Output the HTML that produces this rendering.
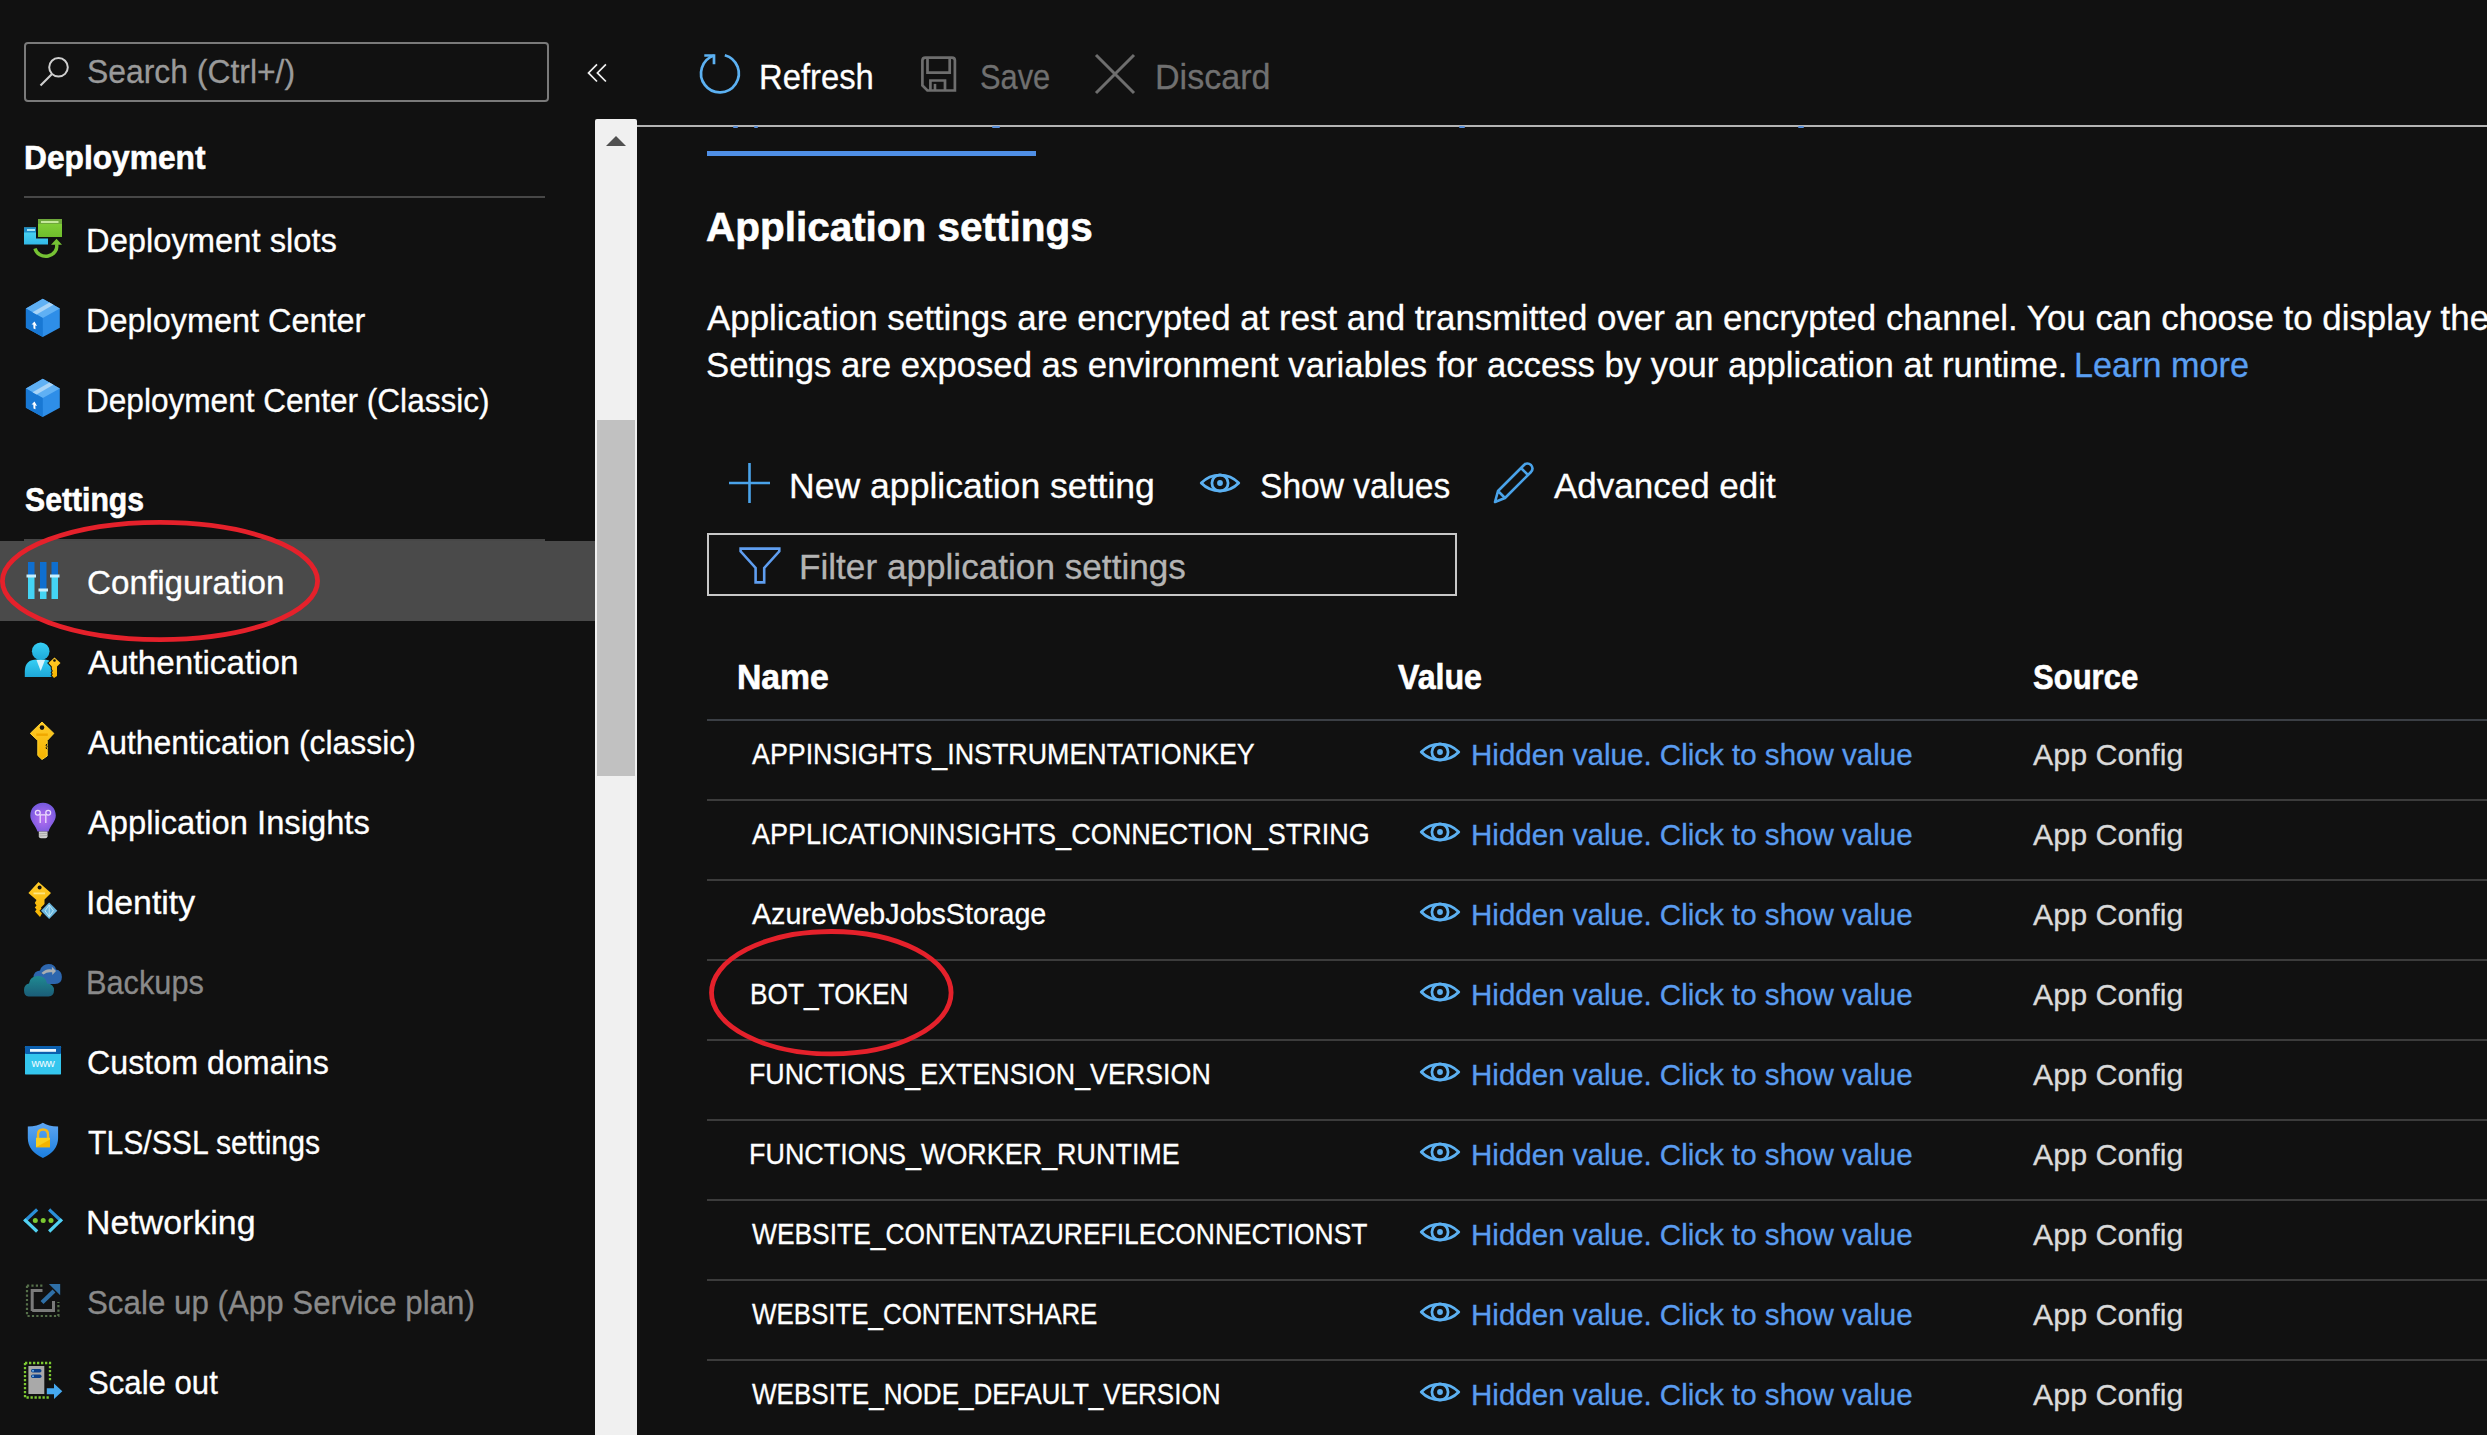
<!DOCTYPE html>
<html><head><meta charset="utf-8"><title>Configuration</title>
<style>
html,body{margin:0;padding:0;background:#111111;width:2487px;height:1435px;overflow:hidden;}
body{position:relative;font-family:"Liberation Sans",sans-serif;color:#fff;}
.t{position:absolute;white-space:nowrap;line-height:1;transform-origin:0 0;-webkit-text-stroke:0.3px currentColor;}
.ic{position:absolute;overflow:visible;}
</style></head><body>
<div style="position:absolute;left:24px;top:42px;width:521px;height:56px;border:2px solid #7a7a7a;border-radius:4px"></div>
<svg class="ic" style="left:36px;top:54px" width="34" height="36" viewBox="0 0 34 36"><circle cx="22.5" cy="13.3" r="9.3" fill="none" stroke="#cfcfcf" stroke-width="2"/><line x1="16" y1="20" x2="4.5" y2="31.5" stroke="#cfcfcf" stroke-width="2.2"/></svg>
<svg class="ic" style="left:584px;top:60px" width="26" height="26" viewBox="0 0 26 26"><path d="M13 4.4 L4.5 12.9 L13 21.5 M21.9 4.4 L13.4 12.9 L21.9 21.5" fill="none" stroke="#f0f0f0" stroke-width="1.7"/></svg>
<div style="position:absolute;left:24px;top:196px;width:521px;height:2px;background:#474747"></div>
<div style="position:absolute;left:24px;top:539px;width:521px;height:2px;background:#474747"></div>
<div style="position:absolute;left:0;top:541px;width:595px;height:80px;background:#4a4a4a"></div>
<div style="position:absolute;left:595px;top:119px;width:42px;height:1316px;background:#f0f0f0;border-radius:2px 2px 0 0"></div>
<div style="position:absolute;left:597px;top:420px;width:38px;height:356px;background:#c1c1c1"></div>
<svg class="ic" style="left:604px;top:134px" width="24" height="14" viewBox="0 0 24 14"><path d="M2 12 L12 2 L22 12 Z" fill="#505050"/></svg>
<div style="position:absolute;left:637px;top:125px;width:1850px;height:2px;background:#b4b4b4"></div>
<div style="position:absolute;left:733px;top:126px;width:5px;height:2px;background:#5a8fd8;border-radius:1px"></div>
<div style="position:absolute;left:754px;top:126px;width:4px;height:2px;background:#5a8fd8;border-radius:1px"></div>
<div style="position:absolute;left:992px;top:126px;width:8px;height:2px;background:#5a8fd8;border-radius:1px"></div>
<div style="position:absolute;left:1459px;top:126px;width:6px;height:2px;background:#5a8fd8;border-radius:1px"></div>
<div style="position:absolute;left:1798px;top:126px;width:6px;height:2px;background:#5a8fd8;border-radius:1px"></div>
<div style="position:absolute;left:707px;top:151px;width:329px;height:5px;background:#4f8fe6"></div>
<div style="position:absolute;left:707px;top:533px;width:746px;height:59px;border:2px solid #c8c8c8"></div>
<div style="position:absolute;left:707px;top:719px;width:1780px;height:2px;background:#3b3f45"></div>
<div style="position:absolute;left:707px;top:799px;width:1780px;height:2px;background:#3c3c3c"></div>
<div style="position:absolute;left:707px;top:879px;width:1780px;height:2px;background:#3c3c3c"></div>
<div style="position:absolute;left:707px;top:959px;width:1780px;height:2px;background:#3c3c3c"></div>
<div style="position:absolute;left:707px;top:1039px;width:1780px;height:2px;background:#3c3c3c"></div>
<div style="position:absolute;left:707px;top:1119px;width:1780px;height:2px;background:#3c3c3c"></div>
<div style="position:absolute;left:707px;top:1199px;width:1780px;height:2px;background:#3c3c3c"></div>
<div style="position:absolute;left:707px;top:1279px;width:1780px;height:2px;background:#3c3c3c"></div>
<div style="position:absolute;left:707px;top:1359px;width:1780px;height:2px;background:#3c3c3c"></div>
<svg class="ic" style="left:696px;top:50px" width="48" height="48" viewBox="0 0 48 48"><path d="M28.8 5.2 A18.9 18.9 0 1 1 18 5.5" fill="none" stroke="#5cb1f2" stroke-width="2.7"/><path d="M8.3 5.5 H18 V14.2" fill="none" stroke="#5cb1f2" stroke-width="2.7"/></svg>
<svg class="ic" style="left:919px;top:54px" width="40" height="40" viewBox="0 0 40 40"><path d="M6.5 3.6 H32.9 Q35.9 3.6 35.9 6.6 V36.5 H8.4 L3.4 31.5 V6.6 Q3.4 3.6 6.5 3.6 Z" fill="none" stroke="#6e6e6e" stroke-width="2.7"/><path d="M8.5 3.6 V18.7 H30.7 V3.6" fill="none" stroke="#6e6e6e" stroke-width="2.7"/><path d="M11.4 36.5 V26.5 H26 V36.5" fill="none" stroke="#6e6e6e" stroke-width="2.7"/><path d="M16 36.5 V29.9" fill="none" stroke="#6e6e6e" stroke-width="2.6"/></svg>
<svg class="ic" style="left:1093px;top:52px" width="44" height="44" viewBox="0 0 44 44"><path d="M3 3 L41 41 M41 3 L3 41" fill="none" stroke="#6e6e6e" stroke-width="3"/></svg>
<svg class="ic" style="left:727px;top:461px" width="46" height="44" viewBox="0 0 46 44"><path d="M2 22 H43 M22.5 2 V42" stroke="#4aa3ea" stroke-width="2.6"/></svg>
<svg class="ic" style="left:1194.8px;top:467.8px" width="50" height="30" viewBox="0 0 50 30"><path d="M6.25 15.00 A26.20 26.20 0 0 1 43.75 15.00 A26.20 26.20 0 0 1 6.25 15.00 Z" fill="none" stroke="#5cb1f2" stroke-width="2.80" stroke-linejoin="round"/><circle cx="25" cy="15" r="8.1" fill="none" stroke="#5cb1f2" stroke-width="2.80"/><circle cx="25" cy="15" r="2.9" fill="#5cb1f2"/></svg>
<svg class="ic" style="left:1491px;top:460px" width="46" height="46" viewBox="0 0 46 46"><path d="M4 42 L7 31 L33 5 Q36.5 2 40 5 Q43 8.5 40 12 L14 38 Z M7 31 L14 38 M30 8 L37 15" fill="none" stroke="#4aa3ea" stroke-width="2.6" stroke-linejoin="round"/></svg>
<svg class="ic" style="left:737px;top:546px" width="46" height="40" viewBox="0 0 46 40"><path d="M3.6 2.6 H42.3 V5.3 L27.2 22 V36.4 H18.6 V22 L3.6 5.3 Z" fill="none" stroke="#5f9ef0" stroke-width="2.6" stroke-linejoin="miter"/></svg>
<svg class="ic" style="left:1415.3px;top:737.0px" width="50" height="30" viewBox="0 0 50 30"><path d="M6.25 15.00 A26.20 26.20 0 0 1 43.75 15.00 A26.20 26.20 0 0 1 6.25 15.00 Z" fill="none" stroke="#5cb1f2" stroke-width="2.80" stroke-linejoin="round"/><circle cx="25" cy="15" r="8.1" fill="none" stroke="#5cb1f2" stroke-width="2.80"/><circle cx="25" cy="15" r="2.9" fill="#5cb1f2"/></svg>
<svg class="ic" style="left:1415.3px;top:817.0px" width="50" height="30" viewBox="0 0 50 30"><path d="M6.25 15.00 A26.20 26.20 0 0 1 43.75 15.00 A26.20 26.20 0 0 1 6.25 15.00 Z" fill="none" stroke="#5cb1f2" stroke-width="2.80" stroke-linejoin="round"/><circle cx="25" cy="15" r="8.1" fill="none" stroke="#5cb1f2" stroke-width="2.80"/><circle cx="25" cy="15" r="2.9" fill="#5cb1f2"/></svg>
<svg class="ic" style="left:1415.3px;top:897.0px" width="50" height="30" viewBox="0 0 50 30"><path d="M6.25 15.00 A26.20 26.20 0 0 1 43.75 15.00 A26.20 26.20 0 0 1 6.25 15.00 Z" fill="none" stroke="#5cb1f2" stroke-width="2.80" stroke-linejoin="round"/><circle cx="25" cy="15" r="8.1" fill="none" stroke="#5cb1f2" stroke-width="2.80"/><circle cx="25" cy="15" r="2.9" fill="#5cb1f2"/></svg>
<svg class="ic" style="left:1415.3px;top:977.0px" width="50" height="30" viewBox="0 0 50 30"><path d="M6.25 15.00 A26.20 26.20 0 0 1 43.75 15.00 A26.20 26.20 0 0 1 6.25 15.00 Z" fill="none" stroke="#5cb1f2" stroke-width="2.80" stroke-linejoin="round"/><circle cx="25" cy="15" r="8.1" fill="none" stroke="#5cb1f2" stroke-width="2.80"/><circle cx="25" cy="15" r="2.9" fill="#5cb1f2"/></svg>
<svg class="ic" style="left:1415.3px;top:1057.0px" width="50" height="30" viewBox="0 0 50 30"><path d="M6.25 15.00 A26.20 26.20 0 0 1 43.75 15.00 A26.20 26.20 0 0 1 6.25 15.00 Z" fill="none" stroke="#5cb1f2" stroke-width="2.80" stroke-linejoin="round"/><circle cx="25" cy="15" r="8.1" fill="none" stroke="#5cb1f2" stroke-width="2.80"/><circle cx="25" cy="15" r="2.9" fill="#5cb1f2"/></svg>
<svg class="ic" style="left:1415.3px;top:1137.0px" width="50" height="30" viewBox="0 0 50 30"><path d="M6.25 15.00 A26.20 26.20 0 0 1 43.75 15.00 A26.20 26.20 0 0 1 6.25 15.00 Z" fill="none" stroke="#5cb1f2" stroke-width="2.80" stroke-linejoin="round"/><circle cx="25" cy="15" r="8.1" fill="none" stroke="#5cb1f2" stroke-width="2.80"/><circle cx="25" cy="15" r="2.9" fill="#5cb1f2"/></svg>
<svg class="ic" style="left:1415.3px;top:1217.0px" width="50" height="30" viewBox="0 0 50 30"><path d="M6.25 15.00 A26.20 26.20 0 0 1 43.75 15.00 A26.20 26.20 0 0 1 6.25 15.00 Z" fill="none" stroke="#5cb1f2" stroke-width="2.80" stroke-linejoin="round"/><circle cx="25" cy="15" r="8.1" fill="none" stroke="#5cb1f2" stroke-width="2.80"/><circle cx="25" cy="15" r="2.9" fill="#5cb1f2"/></svg>
<svg class="ic" style="left:1415.3px;top:1297.0px" width="50" height="30" viewBox="0 0 50 30"><path d="M6.25 15.00 A26.20 26.20 0 0 1 43.75 15.00 A26.20 26.20 0 0 1 6.25 15.00 Z" fill="none" stroke="#5cb1f2" stroke-width="2.80" stroke-linejoin="round"/><circle cx="25" cy="15" r="8.1" fill="none" stroke="#5cb1f2" stroke-width="2.80"/><circle cx="25" cy="15" r="2.9" fill="#5cb1f2"/></svg>
<svg class="ic" style="left:1415.3px;top:1377.0px" width="50" height="30" viewBox="0 0 50 30"><path d="M6.25 15.00 A26.20 26.20 0 0 1 43.75 15.00 A26.20 26.20 0 0 1 6.25 15.00 Z" fill="none" stroke="#5cb1f2" stroke-width="2.80" stroke-linejoin="round"/><circle cx="25" cy="15" r="8.1" fill="none" stroke="#5cb1f2" stroke-width="2.80"/><circle cx="25" cy="15" r="2.9" fill="#5cb1f2"/></svg>
<svg class="ic" style="left:0;top:0" width="595" height="1435" viewBox="0 0 595 1435">
<defs>
<linearGradient id="gBlueBody" x1="0" y1="0" x2="0" y2="1"><stop offset="0" stop-color="#50dcf8"/><stop offset="1" stop-color="#32b8e6"/></linearGradient>
<linearGradient id="gGreen" x1="0" y1="0" x2="0" y2="1"><stop offset="0" stop-color="#86d43a"/><stop offset="1" stop-color="#6fbd2c"/></linearGradient>
<linearGradient id="gPerson" x1="0" y1="0" x2="0" y2="1"><stop offset="0" stop-color="#36cff5"/><stop offset="1" stop-color="#1ea8d8"/></linearGradient>
<linearGradient id="gKey" x1="0" y1="0" x2="0" y2="1"><stop offset="0" stop-color="#ffcb2a"/><stop offset="1" stop-color="#f5b400"/></linearGradient>
<radialGradient id="gBulb" cx="0.5" cy="0.55" r="0.6"><stop offset="0" stop-color="#b86ef2"/><stop offset="1" stop-color="#6f58dc"/></radialGradient>
<linearGradient id="gShield" x1="0" y1="0" x2="0" y2="1"><stop offset="0" stop-color="#5ea6f2"/><stop offset="1" stop-color="#1b7fe0"/></linearGradient>
<linearGradient id="gCloudF" x1="0" y1="0" x2="0" y2="1"><stop offset="0" stop-color="#1f8a92"/><stop offset="1" stop-color="#1b5d78"/></linearGradient>
</defs>
<!-- Deployment slots -->
<g>
 <rect x="24" y="227.5" width="24" height="17" fill="url(#gBlueBody)"/>
 <rect x="24" y="227.5" width="24" height="5" fill="#1f8ec8"/>
 <rect x="27" y="229" width="8" height="2" fill="#a6e4f5"/>
 <rect x="36" y="217.5" width="27" height="21" fill="#111"/>
 <rect x="38" y="219" width="24" height="18" fill="url(#gGreen)"/>
 <rect x="38" y="219" width="24" height="5" fill="#6ea83a"/>
 <rect x="41" y="221" width="17.5" height="2" fill="#c5e89a"/>
 <path d="M35 248.5 A11 10 0 0 0 56.5 244" fill="none" stroke="#111" stroke-width="6"/>
 <path d="M35 248.5 A11 10 0 0 0 56.5 244" fill="none" stroke="#76c234" stroke-width="3.4"/>
 <path d="M51 244.7 L56.5 238.8 L62 244.7 Z" fill="#76c234"/>
</g>
<!-- Deployment Center cubes -->
<g>
 <path d="M42.8 298.8 L59.8 308.4 L59.8 327.7 L42.8 336.9 L25.9 327.7 L25.9 308.4 Z" fill="#2e8ee8"/>
 <path d="M42.8 298.8 L59.8 308.4 L42.8 318 L25.9 308.4 Z" fill="#5fb0f4"/>
 <path d="M25.9 308.4 L42.8 318 L42.8 336.9 L25.9 327.7 Z" fill="#1878d4"/>
 <path d="M49.5 302.5 L53.5 304.8 L36.5 314.5 L32.5 312.2 Z" fill="#a9d4f7"/>
 <path d="M34.5 321.5 L31.5 324.5 L33.3 324.6 L33.5 328.5 L35.5 329.3 L35.3 325.5 L37 325.9 Z" fill="#ffffff"/>
</g>
<g transform="translate(0 80)">
 <path d="M42.8 298.8 L59.8 308.4 L59.8 327.7 L42.8 336.9 L25.9 327.7 L25.9 308.4 Z" fill="#2e8ee8"/>
 <path d="M42.8 298.8 L59.8 308.4 L42.8 318 L25.9 308.4 Z" fill="#5fb0f4"/>
 <path d="M25.9 308.4 L42.8 318 L42.8 336.9 L25.9 327.7 Z" fill="#1878d4"/>
 <path d="M49.5 302.5 L53.5 304.8 L36.5 314.5 L32.5 312.2 Z" fill="#a9d4f7"/>
 <path d="M34.5 321.5 L31.5 324.5 L33.3 324.6 L33.5 328.5 L35.5 329.3 L35.3 325.5 L37 325.9 Z" fill="#ffffff"/>
</g>
<!-- Configuration -->
<g>
 <rect x="28" y="562" width="6.5" height="15" fill="#0f6fd0"/>
 <rect x="28" y="577" width="6.5" height="22" fill="#44d4f4"/>
 <rect x="26.5" y="574.5" width="9.5" height="3" fill="#c8eefc"/>
 <rect x="40" y="562" width="6.5" height="29" fill="#0f6fd0"/>
 <rect x="40" y="591" width="6.5" height="8" fill="#44d4f4"/>
 <rect x="38.5" y="588.5" width="9.5" height="3" fill="#c8eefc"/>
 <rect x="51.5" y="562" width="6.5" height="15" fill="#0f6fd0"/>
 <rect x="51.5" y="577" width="6.5" height="22" fill="#44d4f4"/>
 <rect x="50" y="574.5" width="9.5" height="3" fill="#c8eefc"/>
</g>
<!-- Authentication -->
<g>
 <circle cx="40.7" cy="651.3" r="8.8" fill="url(#gPerson)"/>
 <path d="M24.8 677 L24.8 671 Q25 659.5 37 659.5 L45 659.5 Q52.7 660 52.7 668 L52.7 677 Z" fill="url(#gPerson)"/>
 <path d="M36.5 660 L45 660 L40.7 671 Z" fill="#d8f4fc"/>
 <path d="M54.5 657.5 L60.5 663 L57 666.5 L57 676 L54 678 L51.8 675.5 L52.8 674 L51.8 672.5 L52.8 671 L51.8 669 L51.8 666.5 L48.5 663 Z" fill="#111" stroke="#111" stroke-width="2"/>
 <path d="M54.5 657.5 L60.5 663 L57 666.5 L57 676 L54 678 L51.8 675.5 L52.8 674 L51.8 672.5 L52.8 671 L51.8 669 L51.8 666.5 L48.5 663 Z" fill="url(#gKey)"/>
 <circle cx="54.5" cy="660.5" r="1.3" fill="#111"/>
</g>
<!-- Authentication (classic) key -->
<g>
 <path d="M42 722 L53.9 733.4 L47.2 740.5 L47.2 756 L42 759.5 L37.8 755.5 L37.8 740.5 L30.3 733.4 Z" fill="url(#gKey)" stroke="#ffd42e" stroke-width="1" stroke-linejoin="round"/>
 <circle cx="42" cy="727.6" r="2.3" fill="#111"/>
 <rect x="36.3" y="733.5" width="11.5" height="2.4" fill="#f0a800"/>
 <path d="M47.2 744 L45.8 745 L47.2 746.5 L45.8 747.8 L47.2 749.2" fill="none" stroke="#111" stroke-width="1"/>
</g>
<!-- Application Insights bulb -->
<g>
 <path d="M43 802.8 C50.5 802.8 55.8 808.5 55.8 815.5 C55.8 821.5 50 826 48.5 831.5 L37.5 831.5 C36 826 30.3 821.5 30.3 815.5 C30.3 808.5 35.5 802.8 43 802.8 Z" fill="url(#gBulb)"/>
 <path d="M38.8 831.5 L47.5 831.5 L47.5 836.5 Q47.3 838.2 45.5 838.2 L40.8 838.2 Q39 838.2 38.8 836.5 Z" fill="#d0d0d0"/>
 <path d="M39 833.8 L47.3 833.3 M39 836 L47.3 835.5" stroke="#9a9a9a" stroke-width="0.7"/>
 <circle cx="37.8" cy="812.8" r="2.4" fill="none" stroke="#ecdcfc" stroke-width="1.3"/>
 <circle cx="48.2" cy="812.8" r="2.4" fill="none" stroke="#ecdcfc" stroke-width="1.3"/>
 <path d="M40.2 814.8 H45.8 M40.2 814.5 V823 M45.8 814.5 V823" stroke="#ecdcfc" stroke-width="1.3"/>
</g>
<!-- Identity -->
<g>
 <path d="M38.5 882 L51 893 L44.5 899.5 L44.5 904 L41 907.5 L43 911.5 L40 916.9 L35 911.5 L36.5 909.5 L34.8 907.5 L36.5 905.5 L34.8 903 L36.5 900 L28.4 893 Z" fill="url(#gKey)"/>
 <circle cx="39.6" cy="887.5" r="2" fill="#111"/>
 <rect x="33.5" y="892.5" width="11.5" height="1.8" fill="#ffe680"/>
 <path d="M49 900.5 L58.5 910.8 L49 921 L39.5 910.8 Z" fill="#111"/>
 <path d="M49.2 902.6 L57.3 910.8 L49.2 919 L41 910.8 Z" fill="#6ab6de"/>
 <path d="M49.2 905 L49.2 916.5 M45 910.8 L49.2 905 L53.3 910.8 L49.2 916.5 Z" fill="none" stroke="#c8ecf8" stroke-width="0.9"/>
</g>
<!-- Backups cloud -->
<g>
 <path d="M40 984 Q33.5 984 33.5 977.5 Q33.5 971 40 970.5 Q42 964 48.5 964 Q55 964 56 969.5 Q61.9 970.5 61.9 977 Q61.9 984 55 984 Z" fill="#2d66ae"/>
 <path d="M41.5 973 Q46 968 52 969.5 L51.8 966.8 L56 971 L52.3 975 L52.2 972.3 Q47 971.5 43.5 974.5 Z" fill="#a9aeb2"/>
 <path d="M28.5 996.4 Q24 996.4 24 990 Q24 984.5 29 983.5 Q30 976 38 976 Q46 976 47 983.5 Q54 984 54 990.3 Q54 996.4 48.5 996.4 Z" fill="url(#gCloudF)"/>
</g>
<!-- Custom domains -->
<g>
 <rect x="25" y="1046" width="36" height="28.6" rx="1.2" fill="#34c6ee"/>
 <rect x="25" y="1046" width="36" height="8" rx="1" fill="#0b5fae"/>
 <rect x="30" y="1049" width="26" height="2.8" fill="#eef8ff"/>
 <text x="43" y="1067.3" text-anchor="middle" font-family="Liberation Sans" font-size="11" fill="#f4fcff" letter-spacing="-0.3">www</text>
</g>
<!-- TLS shield -->
<g>
 <path d="M42.9 1122.8 Q48 1126.5 58.1 1126.5 L58.1 1138 Q58.1 1151 42.9 1158 Q27.8 1151 27.8 1138 L27.8 1126.5 Q37.8 1126.5 42.9 1122.8 Z" fill="url(#gShield)"/>
 <path d="M38 1138 L38 1134.5 Q38 1129.5 43 1129.5 Q48 1129.5 48 1134.5 L48 1138" fill="none" stroke="#f2b820" stroke-width="2.4"/>
 <rect x="36" y="1137.8" width="14" height="9.4" fill="#f9cf1e"/>
 <path d="M36 1147.2 L50 1139.5 L50 1147.2 Z" fill="#f4b400"/>
</g>
<!-- Networking -->
<g>
 <path d="M36 1210.6 L25.5 1220.4" stroke="#2a8fd8" stroke-width="3.2" stroke-linecap="square" fill="none"/>
 <path d="M25.5 1220.4 L36 1230.4" stroke="#52d2f2" stroke-width="3.2" stroke-linecap="square" fill="none"/>
 <path d="M50.3 1210.6 L60.7 1220.4" stroke="#2a8fd8" stroke-width="3.2" stroke-linecap="square" fill="none"/>
 <path d="M60.7 1220.4 L50.3 1230.4" stroke="#52d2f2" stroke-width="3.2" stroke-linecap="square" fill="none"/>
 <circle cx="35.3" cy="1220.4" r="2.5" fill="#7cc832"/>
 <circle cx="43.2" cy="1220.4" r="2.5" fill="#7cc832"/>
 <circle cx="51" cy="1220.4" r="2.5" fill="#7cc832"/>
</g>
<!-- Scale up (dim) -->
<g>
 <path d="M27 1285.7 H43 M27 1285.7 V1316 H58.4 V1302" fill="none" stroke="#56704a" stroke-width="2.2" stroke-dasharray="2.2 2.2"/>
 <path d="M32.2 1311 V1290.5 H42.5 M32.2 1310.5 H53.5 V1301" fill="none" stroke="#7a7a7a" stroke-width="3"/>
 <path d="M42 1302.5 L54 1291" stroke="#2f6fa6" stroke-width="4.2"/>
 <path d="M48.9 1284 H60.2 V1295.3 Z" fill="#2f6fa6"/>
</g>
<!-- Scale out -->
<g>
 <path d="M25 1363 H50 V1382 M25 1363 V1397.5 H50" fill="none" stroke="#7cc832" stroke-width="2.3" stroke-dasharray="2.3 1.7"/>
 <rect x="28.4" y="1366" width="15.9" height="28" fill="#a9a9a9"/>
 <rect x="31" y="1369" width="10.5" height="3.5" rx="1.7" fill="#0a3f8a"/>
 <rect x="31" y="1374.5" width="10.5" height="3.5" rx="1.7" fill="#0a3f8a"/>
 <circle cx="33" cy="1370.7" r="1" fill="#6ab4f0"/>
 <circle cx="33" cy="1376.2" r="1" fill="#6ab4f0"/>
 <path d="M46.8 1388.3 H54 V1383.5 L62.3 1391.3 L54 1399 V1394.2 H46.8 Z" fill="#45a8f0"/>
</g>
</svg>

<div class="t" style="left:86.87px;top:54.00px;font-size:34.00px;color:#9a9a9a;transform:scaleX(0.9371)">Search (Ctrl+/)</div>
<div class="t" style="left:23.96px;top:141.00px;font-size:33.50px;font-weight:700;-webkit-text-stroke:0.6px currentColor;transform:scaleX(0.9464)">Deployment</div>
<div class="t" style="left:86.20px;top:223.00px;font-size:34.00px;transform:scaleX(0.9623)">Deployment slots</div>
<div class="t" style="left:86.23px;top:303.00px;font-size:34.00px;transform:scaleX(0.9534)">Deployment Center</div>
<div class="t" style="left:86.30px;top:383.00px;font-size:34.00px;transform:scaleX(0.9287)">Deployment Center (Classic)</div>
<div class="t" style="left:25.09px;top:483.00px;font-size:33.50px;font-weight:700;-webkit-text-stroke:0.6px currentColor;transform:scaleX(0.9013)">Settings</div>
<div class="t" style="left:87.24px;top:565.00px;font-size:34.00px;transform:scaleX(0.9769)">Configuration</div>
<div class="t" style="left:87.92px;top:645.00px;font-size:34.00px;transform:scaleX(0.9767)">Authentication</div>
<div class="t" style="left:87.92px;top:725.00px;font-size:34.00px;transform:scaleX(0.9379)">Authentication (classic)</div>
<div class="t" style="left:87.92px;top:805.00px;font-size:34.00px;transform:scaleX(0.9619)">Application Insights</div>
<div class="t" style="left:85.77px;top:885.00px;font-size:34.00px;transform:scaleX(0.9961)">Identity</div>
<div class="t" style="left:86.37px;top:965.00px;font-size:34.00px;color:#8a8a8a;transform:scaleX(0.9035)">Backups</div>
<div class="t" style="left:87.29px;top:1045.00px;font-size:34.00px;transform:scaleX(0.9481)">Custom domains</div>
<div class="t" style="left:88.22px;top:1125.00px;font-size:34.00px;transform:scaleX(0.8875)">TLS/SSL settings</div>
<div class="t" style="left:86.10px;top:1205.00px;font-size:34.00px;transform:scaleX(0.9965)">Networking</div>
<div class="t" style="left:87.49px;top:1285.00px;font-size:34.00px;color:#8a8a8a;transform:scaleX(0.9204)">Scale up (App Service plan)</div>
<div class="t" style="left:87.50px;top:1365.00px;font-size:34.00px;transform:scaleX(0.9157)">Scale out</div>
<div class="t" style="left:759.30px;top:59.00px;font-size:35.30px;transform:scaleX(0.9288)">Refresh</div>
<div class="t" style="left:979.61px;top:59.00px;font-size:35.30px;color:#707070;transform:scaleX(0.8731)">Save</div>
<div class="t" style="left:1154.69px;top:59.00px;font-size:35.30px;color:#707070;transform:scaleX(0.9654)">Discard</div>
<div class="t" style="left:705.79px;top:207.00px;font-size:40.80px;font-weight:700;-webkit-text-stroke:0.6px currentColor;transform:scaleX(0.9918)">Application settings</div>
<div class="t" style="left:707.01px;top:301.00px;font-size:35.50px;transform:scaleX(0.9826)">Application settings are encrypted at rest and transmitted over an encrypted channel. You can choose to display the</div>
<div class="t" style="left:705.54px;top:348.00px;font-size:35.50px;transform:scaleX(0.9772)">Settings are exposed as environment variables for access by your application at runtime.</div>
<div class="t" style="left:2074.28px;top:348.00px;font-size:35.50px;color:#5a9ff2;transform:scaleX(0.9641)">Learn more</div>
<div class="t" style="left:789.06px;top:468.00px;font-size:35.30px;transform:scaleX(1.0080)">New application setting</div>
<div class="t" style="left:1259.59px;top:468.00px;font-size:35.30px;transform:scaleX(0.9507)">Show values</div>
<div class="t" style="left:1554.41px;top:468.00px;font-size:35.30px;transform:scaleX(0.9912)">Advanced edit</div>
<div class="t" style="left:799.30px;top:549.00px;font-size:35.30px;color:#b4b4b4;transform:scaleX(0.9960)">Filter application settings</div>
<div class="t" style="left:736.82px;top:660.00px;font-size:34.20px;font-weight:700;-webkit-text-stroke:0.6px currentColor;transform:scaleX(0.9867)">Name</div>
<div class="t" style="left:1397.76px;top:660.00px;font-size:34.20px;font-weight:700;-webkit-text-stroke:0.6px currentColor;transform:scaleX(0.9400)">Value</div>
<div class="t" style="left:2032.77px;top:660.00px;font-size:34.20px;font-weight:700;-webkit-text-stroke:0.6px currentColor;transform:scaleX(0.9077)">Source</div>
<div class="t" style="left:751.63px;top:739.00px;font-size:30.20px;transform:scaleX(0.8885)">APPINSIGHTS_INSTRUMENTATIONKEY</div>
<div class="t" style="left:1470.96px;top:740.00px;font-size:30.30px;color:#5a9cf0;transform:scaleX(0.9749)">Hidden value. Click to show value</div>
<div class="t" style="left:2033.12px;top:740.00px;font-size:29.80px;color:#dadada;transform:scaleX(1.0193)">App Config</div>
<div class="t" style="left:751.63px;top:819.00px;font-size:30.20px;transform:scaleX(0.8946)">APPLICATIONINSIGHTS_CONNECTION_STRING</div>
<div class="t" style="left:1470.96px;top:820.00px;font-size:30.30px;color:#5a9cf0;transform:scaleX(0.9749)">Hidden value. Click to show value</div>
<div class="t" style="left:2033.12px;top:820.00px;font-size:29.80px;color:#dadada;transform:scaleX(1.0193)">App Config</div>
<div class="t" style="left:751.63px;top:899.00px;font-size:30.20px;transform:scaleX(0.9496)">AzureWebJobsStorage</div>
<div class="t" style="left:1470.96px;top:900.00px;font-size:30.30px;color:#5a9cf0;transform:scaleX(0.9749)">Hidden value. Click to show value</div>
<div class="t" style="left:2033.12px;top:900.00px;font-size:29.80px;color:#dadada;transform:scaleX(1.0193)">App Config</div>
<div class="t" style="left:749.53px;top:979.00px;font-size:30.20px;transform:scaleX(0.8697)">BOT_TOKEN</div>
<div class="t" style="left:1470.96px;top:980.00px;font-size:30.30px;color:#5a9cf0;transform:scaleX(0.9749)">Hidden value. Click to show value</div>
<div class="t" style="left:2033.12px;top:980.00px;font-size:29.80px;color:#dadada;transform:scaleX(1.0193)">App Config</div>
<div class="t" style="left:749.49px;top:1059.00px;font-size:30.20px;transform:scaleX(0.8880)">FUNCTIONS_EXTENSION_VERSION</div>
<div class="t" style="left:1470.96px;top:1060.00px;font-size:30.30px;color:#5a9cf0;transform:scaleX(0.9749)">Hidden value. Click to show value</div>
<div class="t" style="left:2033.12px;top:1060.00px;font-size:29.80px;color:#dadada;transform:scaleX(1.0193)">App Config</div>
<div class="t" style="left:749.48px;top:1139.00px;font-size:30.20px;transform:scaleX(0.8918)">FUNCTIONS_WORKER_RUNTIME</div>
<div class="t" style="left:1470.96px;top:1140.00px;font-size:30.30px;color:#5a9cf0;transform:scaleX(0.9749)">Hidden value. Click to show value</div>
<div class="t" style="left:2033.12px;top:1140.00px;font-size:29.80px;color:#dadada;transform:scaleX(1.0193)">App Config</div>
<div class="t" style="left:751.57px;top:1219.00px;font-size:30.20px;transform:scaleX(0.8743)">WEBSITE_CONTENTAZUREFILECONNECTIONST</div>
<div class="t" style="left:1470.96px;top:1220.00px;font-size:30.30px;color:#5a9cf0;transform:scaleX(0.9749)">Hidden value. Click to show value</div>
<div class="t" style="left:2033.12px;top:1220.00px;font-size:29.80px;color:#dadada;transform:scaleX(1.0193)">App Config</div>
<div class="t" style="left:751.57px;top:1299.00px;font-size:30.20px;transform:scaleX(0.8580)">WEBSITE_CONTENTSHARE</div>
<div class="t" style="left:1470.96px;top:1300.00px;font-size:30.30px;color:#5a9cf0;transform:scaleX(0.9749)">Hidden value. Click to show value</div>
<div class="t" style="left:2033.12px;top:1300.00px;font-size:29.80px;color:#dadada;transform:scaleX(1.0193)">App Config</div>
<div class="t" style="left:751.57px;top:1379.00px;font-size:30.20px;transform:scaleX(0.8630)">WEBSITE_NODE_DEFAULT_VERSION</div>
<div class="t" style="left:1470.96px;top:1380.00px;font-size:30.30px;color:#5a9cf0;transform:scaleX(0.9749)">Hidden value. Click to show value</div>
<div class="t" style="left:2033.12px;top:1380.00px;font-size:29.80px;color:#dadada;transform:scaleX(1.0193)">App Config</div>
<svg class="ic" style="left:0;top:0" width="2487" height="1435" viewBox="0 0 2487 1435"><ellipse cx="160" cy="581" rx="157.6" ry="58.6" fill="none" stroke="#e5212b" stroke-width="4.8"/><ellipse cx="831.3" cy="992.7" rx="119.8" ry="61.2" fill="none" stroke="#e5212b" stroke-width="4.8"/></svg>
</body></html>
